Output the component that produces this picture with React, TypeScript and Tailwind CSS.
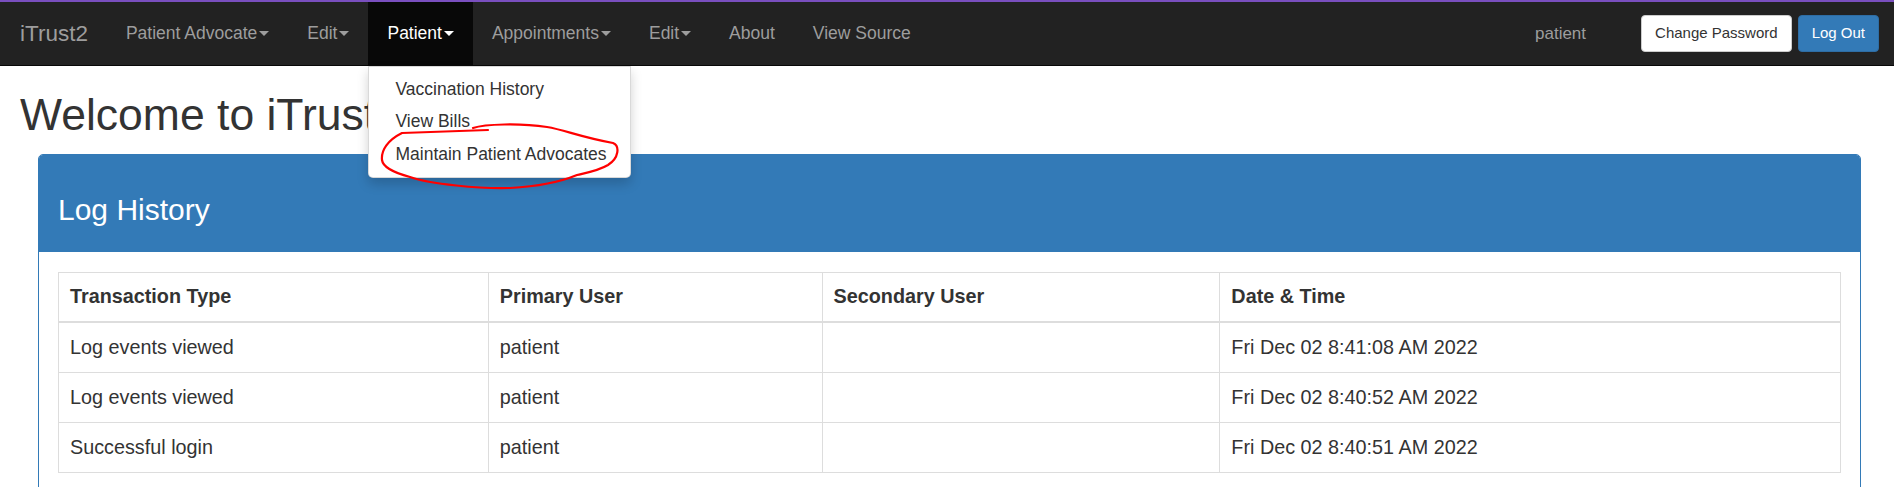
import React from 'react';

type NavItem = {
  label: string;
  caret?: boolean;
  active?: boolean;
};

const navItems: NavItem[] = [
  { label: 'Patient Advocate', caret: true },
  { label: 'Edit', caret: true },
  { label: 'Patient', caret: true, active: true },
  { label: 'Appointments', caret: true },
  { label: 'Edit', caret: true },
  { label: 'About' },
  { label: 'View Source' },
];

const menuItems = ['Vaccination History', 'View Bills', 'Maintain Patient Advocates'];

const logRows = [
  { type: 'Log events viewed', primary: 'patient', secondary: '', date: 'Fri Dec 02 8:41:08 AM 2022' },
  { type: 'Log events viewed', primary: 'patient', secondary: '', date: 'Fri Dec 02 8:40:52 AM 2022' },
  { type: 'Successful login', primary: 'patient', secondary: '', date: 'Fri Dec 02 8:40:51 AM 2022' },
];

function Caret() {
  return (
    <span className="ml-[2px] inline-block h-0 w-0 border-x-[5px] border-t-[5px] border-x-transparent border-t-current" />
  );
}

function Navbar() {
  return (
    <nav className="flex h-[64px] items-stretch border-b border-[#080808] bg-[#222222]">
      {/* Brand */}
      <a className="flex items-center pl-[20px] pr-[19px] text-[22.5px] text-[#9d9d9d]">iTrust2</a>

      {/* Left nav */}
      <ul className="flex items-stretch">
        {navItems.map((item, i) => (
          <li key={i} className="relative flex items-stretch">
            <a
              className={`flex items-center px-[19px] text-[17.5px] ${
                item.active ? 'bg-[#080808] text-white' : 'text-[#9d9d9d]'
              }`}
            >
              {item.label}
              {item.caret && <Caret />}
            </a>

            {/* Open dropdown */}
            {item.active && (
              <ul className="absolute left-0 top-[calc(100%+1px)] z-20 w-[263px] rounded-b-[5px] border border-[rgba(0,0,0,0.15)] bg-white py-[6px] shadow-[0_6px_12px_rgba(0,0,0,0.175)]">
                {menuItems.map((m) => (
                  <li key={m} className="px-[26px] py-[3.75px] text-[17.5px] leading-[25px] text-[#333333] whitespace-nowrap">
                    {m}
                  </li>
                ))}
              </ul>
            )}
          </li>
        ))}
      </ul>

      {/* Right side */}
      <div className="ml-auto flex items-center pr-[15px]">
        <span className="mr-[55px] text-[17px] text-[#9d9d9d]">patient</span>
        <button className="h-[37px] rounded-[4px] border border-[#cccccc] bg-white px-[13px] text-[15px] text-[#333333]">
          Change Password
        </button>
        <button className="ml-[6px] h-[37px] rounded-[4px] border border-[#2e6da4] bg-[#337ab7] px-[13px] text-[15px] text-white">
          Log Out
        </button>
      </div>
    </nav>
  );
}

function LogPanel() {
  return (
    <div className="ml-[38px] mr-[33px] mt-[15px] overflow-hidden rounded-[5px] border border-[#337ab7] bg-white">
      <div className="h-[97px] bg-[#337ab7] pl-[19px] pt-[38px]">
        <h3 className="text-[30px] leading-[33px] text-white">Log History</h3>
      </div>
      <div className="px-[19px] pb-[19px] pt-[20px]">
        <table className="w-[1783px] border-collapse text-left text-[19.8px] text-[#333333]">
          <colgroup>
            <col className="w-[430px]" />
            <col className="w-[334px]" />
            <col className="w-[398px]" />
            <col className="w-[621px]" />
          </colgroup>
          <thead>
            <tr>
              {['Transaction Type', 'Primary User', 'Secondary User', 'Date & Time'].map((h) => (
                <th
                  key={h}
                  className="border border-b-2 border-[#dddddd] px-[11px] py-[10.5px] font-bold leading-[27px]"
                >
                  {h}
                </th>
              ))}
            </tr>
          </thead>
          <tbody>
            {logRows.map((r, i) => (
              <tr key={i}>
                <td className="border border-[#dddddd] px-[11px] py-[11px] leading-[27px]">{r.type}</td>
                <td className="border border-[#dddddd] px-[11px] py-[11px] leading-[27px]">{r.primary}</td>
                <td className="border border-[#dddddd] px-[11px] py-[11px] leading-[27px]">{r.secondary}</td>
                <td className="border border-[#dddddd] px-[11px] py-[11px] leading-[27px]">{r.date}</td>
              </tr>
            ))}
          </tbody>
        </table>
      </div>
    </div>
  );
}

// Hand-drawn red circle annotation over the dropdown
function Annotation() {
  return (
    <svg className="pointer-events-none absolute left-0 top-0 z-30" width="1894" height="487" viewBox="0 0 1894 487">
      <path
        d="M 473 128 C 485 124, 520 123, 547 127 C 565 130, 580 137, 613 143 C 620 146, 619 158, 608 165 C 598 171, 585 173, 577 175 C 565 180, 545 186, 510 188 C 480 189, 430 184, 410 177 C 395 173, 383 168, 382 160 C 381 150, 388 140, 402 133 L 488 130"
        fill="none"
        stroke="#ff0000"
        strokeWidth="2.2"
        strokeLinecap="round"
        strokeLinejoin="round"
      />
    </svg>
  );
}

export default function App() {
  return (
    <div className="relative h-[487px] w-full overflow-hidden bg-white font-['Liberation_Sans',Arial,sans-serif] text-[#333333]">
      <div className="h-[2px] bg-[#7a4fbf]" />
      <Navbar />
      <div className="px-[20px]">
        <h1 className="mt-[24.5px] text-[44.5px] leading-[48px]">Welcome to iTrust2</h1>
      </div>
      <LogPanel />
      <Annotation />
    </div>
  );
}
